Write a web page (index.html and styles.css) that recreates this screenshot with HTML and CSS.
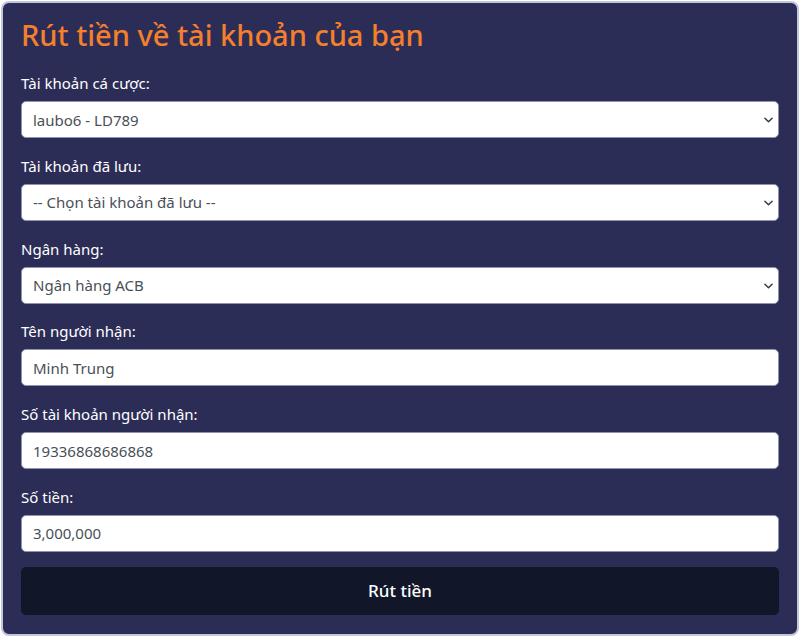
FILE: index.html
```html
<!DOCTYPE html>
<html lang="vi">
<head>
<meta charset="utf-8">
<title>Rút tiền</title>
<link rel="stylesheet" href="styles.css">
</head>
<body>
<div class="card">
  <h1 class="title">Rút tiền về tài khoản của bạn</h1>
  <form class="form">
    <div class="group">
      <label class="label">Tài khoản cá cược:</label>
      <div class="select-wrap">
        <select class="control"><option>laubo6 - LD789</option></select>
        <svg class="chev" viewBox="0 0 10 6" width="10" height="6"><path d="M1 1l4 4 4-4" fill="none" stroke="#343a40" stroke-width="1.6" stroke-linecap="round" stroke-linejoin="round"/></svg>
      </div>
    </div>
    <div class="group">
      <label class="label">Tài khoản đã lưu:</label>
      <div class="select-wrap">
        <select class="control"><option>-- Chọn tài khoản đã lưu --</option></select>
        <svg class="chev" viewBox="0 0 10 6" width="10" height="6"><path d="M1 1l4 4 4-4" fill="none" stroke="#343a40" stroke-width="1.6" stroke-linecap="round" stroke-linejoin="round"/></svg>
      </div>
    </div>
    <div class="group">
      <label class="label">Ngân hàng:</label>
      <div class="select-wrap">
        <select class="control"><option>Ngân hàng ACB</option></select>
        <svg class="chev" viewBox="0 0 10 6" width="10" height="6"><path d="M1 1l4 4 4-4" fill="none" stroke="#343a40" stroke-width="1.6" stroke-linecap="round" stroke-linejoin="round"/></svg>
      </div>
    </div>
    <div class="group">
      <label class="label">Tên người nhận:</label>
      <input class="control" type="text" value="Minh Trung">
    </div>
    <div class="group">
      <label class="label">Số tài khoản người nhận:</label>
      <input class="control" type="text" value="19336868686868">
    </div>
    <div class="group">
      <label class="label">Số tiền:</label>
      <input class="control" type="text" value="3,000,000">
    </div>
    <button class="submit" type="button">Rút tiền</button>
  </form>
</div>
</body>
</html>
```

FILE: styles.css
```css
* { box-sizing: border-box; }
html, body { margin: 0; padding: 0; }
body {
  background: #ffffff;
  font-family: "Noto Sans", "Open Sans", sans-serif;
  padding: 1px;
}
.card {
  height: 635px;
  background: #2c2d56;
  border: 2px solid #c3c5da;
  border-radius: 8px;
  padding: 15px 18px 17px 18px;
  display: flex;
  flex-direction: column;
}
.title {
  margin: 0 0 19px 0;
  font-size: 29px;
  line-height: 34px;
  font-weight: 500;
  color: #f47f2c;
}
.form { display: flex; flex-direction: column; }
.group { display: flex; flex-direction: column; margin-bottom: 15.75px; }
.group:last-of-type { margin-bottom: 15px; }
.label {
  color: #ffffff;
  font-size: 15px;
  line-height: 24px;
  margin-bottom: 6px;
}
.select-wrap { position: relative; }
.control {
  display: block;
  width: 100%;
  height: 37px;
  border: 1px solid #8f93b0;
  border-radius: 5px;
  background: #ffffff;
  padding: 0 11px;
  font-family: "Noto Sans", "Open Sans", sans-serif;
  font-size: 15px;
  color: #495057;
  -webkit-appearance: none;
  appearance: none;
  outline: none;
}
.chev {
  position: absolute;
  right: 6px;
  top: 16px;
  width: 9px;
  height: 6px;
  pointer-events: none;
}
.submit {
  height: 48px;
  width: 100%;
  border: none;
  border-radius: 5px;
  background: #121629;
  color: #ffffff;
  font-family: "Noto Sans", "Open Sans", sans-serif;
  font-size: 17px;
  font-weight: 500;
}
```
